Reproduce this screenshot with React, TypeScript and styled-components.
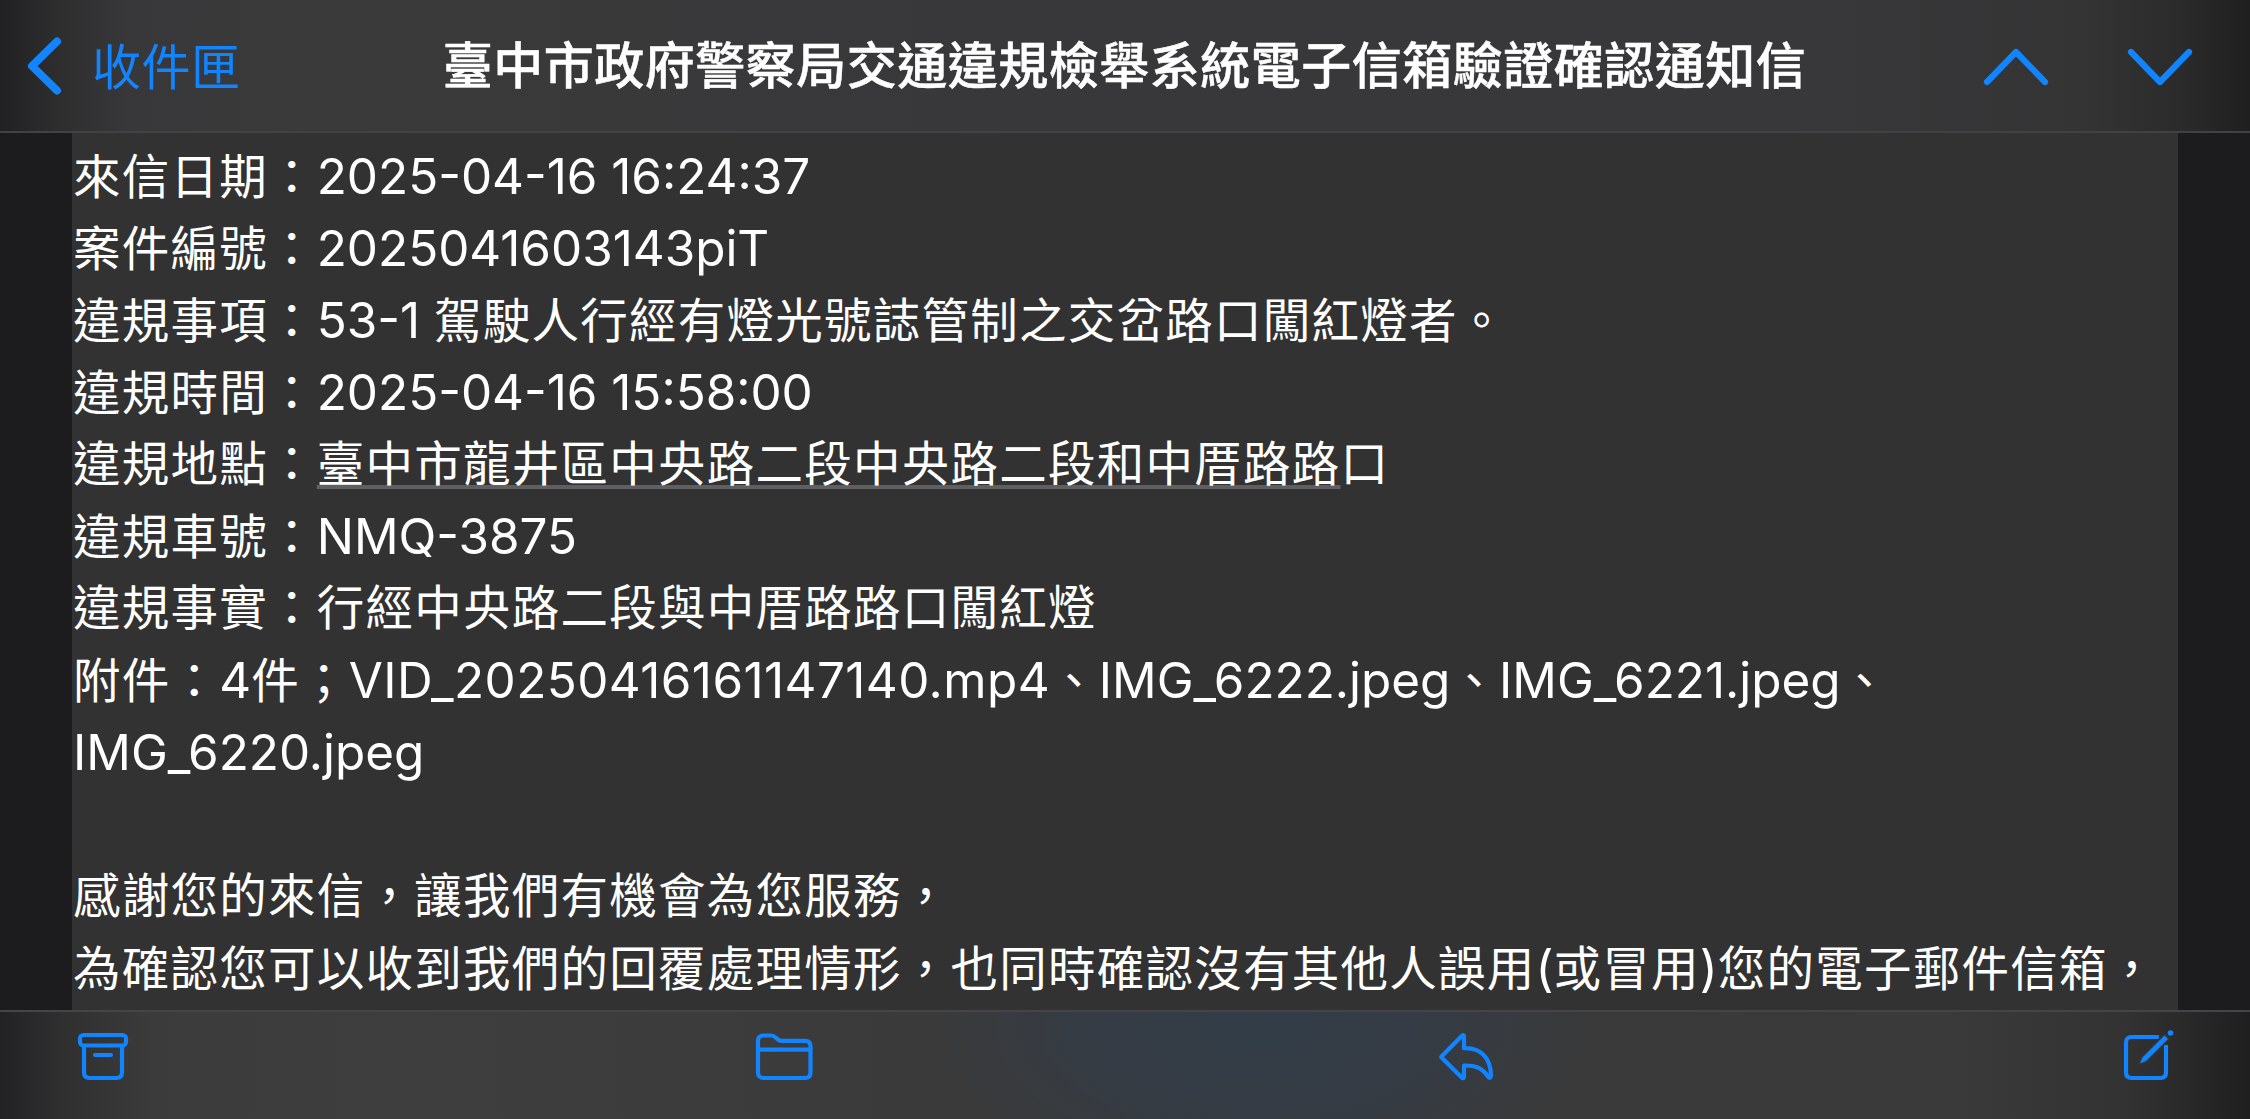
import React from "react";
import styled, { createGlobalStyle } from "styled-components";

type Line = {
    text: string;
    address?: string;
    rest?: string;
};

const lines: Line[] = [
    { text: "來信日期：2025-04-16 16:24:37" },
    { text: "案件編號：2025041603143piT" },
    { text: "違規事項：53-1 駕駛人行經有燈光號誌管制之交岔路口闖紅燈者。" },
    { text: "違規時間：2025-04-16 15:58:00" },
    {
        text: "違規地點：",
        address: "臺中市龍井區中央路二段中央路二段和中厝路路",
        rest: "口",
    },
    { text: "違規車號：NMQ-3875" },
    { text: "違規事實：行經中央路二段與中厝路路口闖紅燈" },
    {
        text: "附件：4件；VID_20250416161147140.mp4、IMG_6222.jpeg、IMG_6221.jpeg、",
    },
    { text: "IMG_6220.jpeg" },
    { text: "" },
    { text: "感謝您的來信，讓我們有機會為您服務，" },
    {
        text: "為確認您可以收到我們的回覆處理情形，也同時確認沒有其他人誤用(或冒用)您的電子郵件信箱，",
    },
];

// Latin runs are set a little larger than the Chinese text around them
function Mixed({ text }: { text: string }) {
    return (
        <>
            {text.split(/([\x20-\x7e]+)/).map((part, i) =>
                i % 2 ? (
                    <Latin key={i} $wide={part.startsWith("VID")}>
                        {part}
                    </Latin>
                ) : (
                    part
                )
            )}
        </>
    );
}

function App() {
    return (
        <Screen>
            <GlobalStyle />
            <Header>
                <BackButton>
                    <Icon width="38" height="64" $stroke={8}>
                        <path d="M32 7.5 7 32 32 56.5" />
                    </Icon>
                    <BackLabel>收件匣</BackLabel>
                </BackButton>
                <Title>臺中市政府警察局交通違規檢舉系統電子信箱驗證確認通知信</Title>
                <Nav>
                    <Icon width="72" height="48" $stroke={6.2}>
                        <path d="M7 40 36 10 65 40" />
                    </Icon>
                    <Icon width="72" height="48" $stroke={6.2}>
                        <path d="M7 10 36 40 65 10" />
                    </Icon>
                </Nav>
            </Header>
            <Main>
                <Message>
                    {lines.map((line, i) => (
                        <Row key={i}>
                            <Mixed text={line.text} />
                            {line.address && <Address>{line.address}</Address>}
                            {line.rest}
                        </Row>
                    ))}
                </Message>
            </Main>
            <Toolbar>
                <Icon width="52" height="54">
                    <rect x="3" y="5" width="46" height="10.5" rx="3.5" />
                    <path d="M7 16v26.5q0 5.5 5.5 5.5h27q5.5 0 5.5-5.5V16" />
                    <path d="M18 25h16" />
                </Icon>
                <Icon width="58" height="54">
                    <path d="M3 42.5V11q0-5.500 5.500-5.500h7.500q2.500 0 4.500 2l2 1.700q1.700 1.600 4 1.600H50q5.500 0 5.500 5.500v26.200q0 5.500-5.500 5.500H8.500Q3 48 3 42.500Z" />
                    <path d="M3 19.7h52.5" />
                </Icon>
                <Icon width="58" height="54">
                    <path d="M3.500 26.500 23.800 6Q26 4 26 6.500V18.200C43 17.500 52.500 28 53 45.500Q52.700 49.500 50 46.500C44 37.500 37 35.200 26 35.500V46.500Q26 49.300 23.800 47.500L3.500 27.500Q2.900 27 3.500 26.500Z" />
                </Icon>
                <Icon width="52" height="54">
                    <path
                        d="M37 7H9.500Q4 7 4 12.500v30Q4 48 9.500 48h29q5.500 0 5.500-5.500V15"
                        strokeLinecap="butt"
                    />
                    <path
                        d="m18 33.500 2.500-6L42.500 5.500l3.500 3.500L24 31Z"
                        fill="currentColor"
                        stroke="#343435"
                        strokeWidth="4"
                        paintOrder="stroke"
                    />
                    <circle cx="48.5" cy="3" r="2.8" fill="currentColor" stroke="none" />
                </Icon>
            </Toolbar>
        </Screen>
    );
}

const GlobalStyle = createGlobalStyle`
    body {
        margin: 0;
        background-color: #1c1c1e;
    }
`;

const Screen = styled.div`
    display: grid;
    grid-template-rows: 133px 1fr 109px;
    height: 1119px;
    overflow: hidden;
    font-family: Inter, "Noto Sans CJK TC", sans-serif;
    color: #fff;
`;

const Header = styled.header`
    display: grid;
    grid-template-columns: 1fr auto 1fr;
    align-items: center;
    border-bottom: 2px solid #424243;
    background: linear-gradient(
        90deg,
        #212123 0,
        #2e2e2f 60px,
        #38383a 130px,
        #3a3a3a 300px,
        #38383a 1000px,
        #38383a 1800px,
        #343435 2080px,
        #2b2b2c 2180px,
        #1f1f20 2250px
    );
`;

const BackButton = styled.div`
    display: flex;
    align-items: center;
    gap: 29px;
    padding-left: 25px;
    color: #1184fe;
`;

const BackLabel = styled.span`
    padding-bottom: 5px;
    font-size: 49px;
    letter-spacing: 0.5px;
`;

const Title = styled.h1`
    margin: 0;
    padding: 0 1px 7px 0;
    font-size: 50px;
    font-weight: 500;
    letter-spacing: 0.5px;
    white-space: nowrap;
    -webkit-text-stroke: 0.5px #fff;
`;

const Nav = styled.nav`
    display: flex;
    justify-content: flex-end;
    gap: 72px;
    padding-right: 54px;
    color: #1184fe;
`;

const Icon = styled.svg<{ $stroke?: number }>`
    flex: none;
    overflow: visible;
    fill: none;
    stroke: currentColor;
    stroke-width: ${({ $stroke = 4.2 }) => $stroke};
    stroke-linecap: round;
    stroke-linejoin: round;
`;

const Main = styled.main`
    display: flex;
    min-height: 0;
    padding: 0 72px;
`;

const Message = styled.article`
    flex: 1;
    overflow: hidden;
    padding: 7px 0 0 1px;
    background-color: #323232;
    font-size: 47.5px;
    letter-spacing: 1.25px;
`;

const Row = styled.div`
    height: 72px;
    line-height: 72px;
    white-space: pre;
`;

const Latin = styled.span<{ $wide: boolean }>`
    font-size: 49.4px;
    letter-spacing: ${({ $wide }) => ($wide ? "0.45px" : "0")};
`;

const Address = styled.span`
    text-decoration: underline 4px #5f5f61;
    text-underline-offset: 4px;
    text-decoration-skip-ink: none;
`;

const Toolbar = styled.footer`
    display: flex;
    justify-content: space-between;
    align-items: flex-start;
    box-sizing: border-box;
    padding: 18px 76px 0 77px;
    border-top: 2px solid #454547;
    color: #1184fe;
    background: radial-gradient(
            ellipse 320px 160px at 1260px 15px,
            #323d47,
            rgba(52, 60, 70, 0.8) 55%,
            transparent
        ),
        linear-gradient(
            90deg,
            #222224 0,
            #2f2f30 60px,
            #3b3b3b 150px,
            #3e3e3e 400px,
            #3a3a3b 900px,
            #39393a 1250px,
            #3a3a3a 1950px,
            #323233 2130px,
            #1f1f20 2250px
        );
`;

export default App;
